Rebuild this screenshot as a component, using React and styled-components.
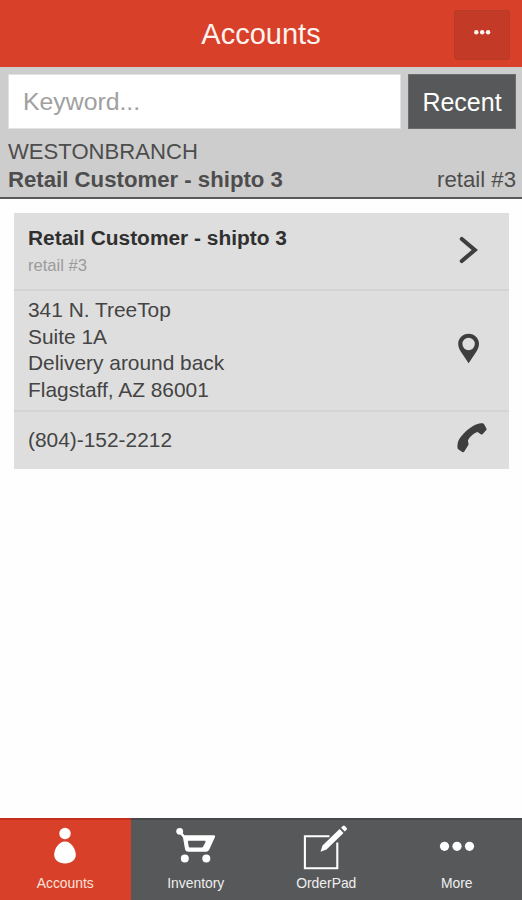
import React, { useState } from 'react';
import styled, { createGlobalStyle, css } from 'styled-components';

const COLORS = {
    RED: '#d84029',
    DARK_RED: '#c33a26',
    SLATE: '#565859',
    PANEL: '#cdcdcd',
    CARD: '#dedede',
    ICON: '#3e3e3e',
};

const GlobalStyle = createGlobalStyle`
    * {
        box-sizing: border-box;
    }
    body {
        margin: 0;
        background: #fefefe;
        font-family: 'Liberation Sans', Arial, sans-serif;
    }
    button,
    input {
        font-family: inherit;
    }
`;
const Root = styled.div`
    display: flex;
    flex-direction: column;
    width: 100%;
    height: 100vh;
    overflow: hidden;
`;
const Header = styled.header`
    display: grid;
    grid-template-columns: 68px 1fr 68px;
    align-items: center;
    flex: none;
    height: 67px;
    background: ${COLORS.RED};
`;
const Title = styled.h1`
    grid-column: 2;
    margin: 2px 0 0;
    color: #fdf3ef;
    font-size: 29px;
    font-weight: 400;
    line-height: 33px;
    text-align: center;
`;
const OptionsButton = styled.button`
    display: flex;
    justify-content: center;
    width: 56px;
    height: 50px;
    margin-top: 3px;
    padding: 18px 0 0;
    background: ${COLORS.DARK_RED};
    border: 1px solid #b83a28;
    border-radius: 3px;
`;
const SearchPanel = styled.section`
    flex: none;
    height: 132px;
    padding: 7px 6px 0 8px;
    background: ${COLORS.PANEL};
    border-bottom: 2px solid ${COLORS.SLATE};
    color: #4d4d4d;
`;
const SearchRow = styled.div`
    display: flex;
    gap: 7px;
    height: 55px;
`;
const SearchInput = styled.input`
    flex: 1;
    min-width: 0;
    padding: 0 15px 0 14px;
    background: white;
    border: 1px solid #e2e2e2;
    border-radius: 0;
    font-size: 24.8px;
    outline: none;
    &::placeholder {
        color: #a0a0a0;
        opacity: 1;
    }
`;
const RecentButton = styled.button`
    width: 108px;
    padding: 1px 0 0;
    background: ${COLORS.SLATE};
    border: 1px solid #6b6d6e;
    color: white;
    font-size: 25px;
`;
const Branch = styled.div`
    margin-top: 9px;
    font-size: 22.1px;
    line-height: 28px;
`;
const Selection = styled.div`
    display: flex;
    justify-content: space-between;
    font-size: 22.2px;
    line-height: 28px;
`;
const Content = styled.main`
    flex: 1;
    padding: 14px 13px 0 14px;
`;
const Card = styled.div`
    background: ${COLORS.CARD};
    color: #444;
    font-size: 20.9px;
    line-height: 26.5px;
`;
const CardRow = styled.div`
    display: flex;
    align-items: center;
    justify-content: space-between;
    height: ${({ height }) => height}px;
    padding: 0 20px 0 14px;
    & + & {
        padding-bottom: 1px;
        border-top: 2px solid #d4d4d4;
    }
`;
const CustomerName = styled.div`
    color: #303030;
    font-weight: bold;
    line-height: 28px;
`;
const CustomerId = styled.div`
    color: #9b9b9b;
    font-size: 16.6px;
    line-height: 27px;
`;
const RowIcon = styled.svg`
    flex: none;
    width: 40px;
    height: 40px;
    color: ${COLORS.ICON};
`;
const TabBar = styled.nav`
    display: flex;
    flex: none;
    height: 82px;
    background: ${COLORS.SLATE};
`;
const Tab = styled.button`
    display: flex;
    flex: 1;
    flex-direction: column;
    align-items: center;
    padding: 5px 0 0;
    border: none;
    border-top: 2px solid #454748;
    background: ${COLORS.SLATE};
    color: #efefef;
    font-size: 13.9px;
    line-height: 16px;
    ${({ selected }) =>
        selected &&
        css`
            border-top-color: #c52e1a;
            background: ${COLORS.RED};
            color: #fbe3dc;
        `}
`;
const TabIcon = styled.svg`
    width: 52px;
    height: 50px;
    color: white;
`;

const AccountsIcon = () => (
    <TabIcon viewBox="0 0 52 50" fill="currentColor">
        <circle cx="26" cy="8.5" r="5.7" />
        <path d="M26 16.6c6.2 0 10.8 7.7 10.8 13.2 0 5.3-4.4 8.7-10.8 8.7s-10.8-3.4-10.8-8.7c0-5.5 4.6-13.2 10.8-13.2z" />
    </TabIcon>
);
const InventoryIcon = () => (
    <TabIcon viewBox="0 0 52 50" fill="currentColor">
        <circle cx="9.7" cy="6.3" r="3.4" />
        <path d="M9.7 6.3l4.8 6.2" stroke="currentColor" strokeWidth="2.5" />
        <path
            d="M12.6 10.2h31.2q2 0 1.2 1.8l-5.6 12.2q-1.1 2.5-3.6 2.5H18.3q-2.8 0-3.3-2.7zM18.6 15.8q-.8 0-.7.8l.8 5q.2 1 1.2 1h11.7q1.1 0 1.6-1l2.2-4.4q.7-1.4-.7-1.4z"
            fillRule="evenodd"
        />
        <circle cx="14.8" cy="33.6" r="4" />
        <circle cx="36.3" cy="33.6" r="4" />
    </TabIcon>
);
const OrderPadIcon = () => (
    <TabIcon viewBox="0 0 52 50" fill="none" stroke="currentColor">
        <path d="M29.5 11.3H4.9v31.9h32.4V17.5" strokeWidth="2.1" />
        <path
            d="M20.5 26.8l2-6.3L39.6 3.9l3.9 4.1-17 16.4zM41 2.7l1.9-1.8q1.1-.7 2 .2l1.8 1.9q.7 1-.1 1.8l-1.8 1.8z"
            fill="currentColor"
            stroke="none"
        />
    </TabIcon>
);
const MoreIcon = () => (
    <TabIcon viewBox="0 0 52 50" fill="currentColor">
        <circle cx="13.5" cy="21.3" r="4.6" />
        <circle cx="26" cy="21.3" r="4.6" />
        <circle cx="38.5" cy="21.3" r="4.6" />
    </TabIcon>
);
const ChevronIcon = () => (
    <RowIcon viewBox="0 0 40 40" fill="none">
        <path
            d="M12.8 8L25.8 19 12.8 30"
            stroke="currentColor"
            strokeWidth="4.1"
            strokeLinecap="round"
        />
    </RowIcon>
);
const PinIcon = () => (
    <RowIcon viewBox="0 0 40 40">
        <path
            d="M19.6 3.7C13.7 3.7 9.2 8.2 9.2 13.8c0 3 1 5.1 2.7 8l7.7 11.4 7.7-11.4c1.7-2.9 2.7-5 2.7-8 0-5.6-4.5-10.1-10.4-10.1zm0 4.1a6.2 6.2 0 110 12.4 6.2 6.2 0 010-12.4z"
            fill="currentColor"
            fillRule="evenodd"
        />
    </RowIcon>
);
const PhoneIcon = () => (
    <RowIcon viewBox="0 0 40 40">
        <path
            d="M27 4.6c2.2-.9 4.4-1.4 6.2-1.4 1 0 1.5.4 1.9 1.1l2.2 4c.4.8.3 1.5-.4 2.2l-3.2 3.4c-.6.6-1.2.7-1.9.3l-3.3-2.1c-3 .7-7.6 4.5-9.6 8.3l.6 3.3c.1.6 0 1-.3 1.5l-3.9 6.2c-.5.8-1.2 1-2 .5l-3.7-2.4c-.7-.5-1-1-1.1-2-.2-2.5.1-5.3 1.3-7.6C12.900 14.800 20 7.500 27 4.600z"
            fill="currentColor"
        />
    </RowIcon>
);

const TABS = [
    { label: 'Accounts', Icon: AccountsIcon },
    { label: 'Inventory', Icon: InventoryIcon },
    { label: 'OrderPad', Icon: OrderPadIcon },
    { label: 'More', Icon: MoreIcon },
];

const App = () => {
    const [selected, setSelected] = useState(0);
    return (
        <Root>
            <GlobalStyle />
            <Header>
                <Title>Accounts</Title>
                <OptionsButton aria-label="Options">
                    <svg width="18" height="6" fill="#fff5f0">
                        <circle cx="3.3" cy="3.2" r="2.2" />
                        <circle cx="9.2" cy="3.2" r="2.2" />
                        <circle cx="15.1" cy="3.2" r="2.2" />
                    </svg>
                </OptionsButton>
            </Header>
            <SearchPanel>
                <SearchRow>
                    <SearchInput placeholder="Keyword..." />
                    <RecentButton>Recent</RecentButton>
                </SearchRow>
                <Branch>WESTONBRANCH</Branch>
                <Selection>
                    <strong>Retail Customer - shipto 3</strong>
                    <span>retail #3</span>
                </Selection>
            </SearchPanel>
            <Content>
                <Card>
                    <CardRow height={76}>
                        <div>
                            <CustomerName>Retail Customer - shipto 3</CustomerName>
                            <CustomerId>retail #3</CustomerId>
                        </div>
                        <ChevronIcon />
                    </CardRow>
                    <CardRow height={121}>
                        <div>
                            341 N. TreeTop
                            <br />
                            Suite 1A
                            <br />
                            Delivery around back
                            <br />
                            Flagstaff, AZ 86001
                        </div>
                        <PinIcon />
                    </CardRow>
                    <CardRow height={59}>
                        <div>(804)-152-2212</div>
                        <PhoneIcon />
                    </CardRow>
                </Card>
            </Content>
            <TabBar>
                {TABS.map(({ label, Icon }, index) => (
                    <Tab
                        key={label}
                        selected={selected === index}
                        onClick={() => setSelected(index)}>
                        <Icon />
                        {label}
                    </Tab>
                ))}
            </TabBar>
        </Root>
    );
};

export default App;
